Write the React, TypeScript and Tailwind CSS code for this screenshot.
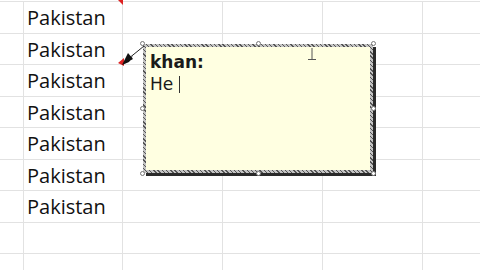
import React from 'react'

const rowHeights = ['h-[32px]', 'h-[31px]', 'h-[32px]', 'h-[31px]', 'h-[32px]', 'h-[31px]', 'h-[32px]', 'h-[31px]', 'h-[32px]']
const texts = ['Pakistan', 'Pakistan', 'Pakistan', 'Pakistan', 'Pakistan', 'Pakistan', 'Pakistan', '', '']

function Handle({ className }: { className: string }) {
  return <div className={`absolute w-[5px] h-[5px] rounded-full bg-white border border-[#777] ${className}`} />
}

export default function App() {
  return (
    <div className="relative w-[480px] h-[270px] overflow-hidden bg-white" style={{ fontFamily: '"Open Sans", sans-serif' }}>
      {/* grid */}
      <div className="flex flex-col border-t border-[#e2e2e2] mt-px">
        {rowHeights.map((h, i) => (
          <div key={i} className={`flex ${h} shrink-0`}>
            <div className="w-[24px] shrink-0 border-r border-b border-[#e2e2e2]" />
            <div className="w-[99px] shrink-0 border-r border-b border-[#e2e2e2] flex items-center pl-[3px] pt-[1px] text-[20px] text-[#111] leading-none">
              {texts[i]}
            </div>
            <div className="w-[100px] shrink-0 border-r border-b border-[#e2e2e2]" />
            <div className="w-[100px] shrink-0 border-r border-b border-[#e2e2e2]" />
            <div className="w-[100px] shrink-0 border-r border-b border-[#e2e2e2]" />
            <div className="flex-1 border-b border-[#e2e2e2]" />
          </div>
        ))}
      </div>

      {/* comment box */}
      <div className="absolute left-[143px] top-[44px] w-[230px] h-[129px] p-[3px] bg-[repeating-linear-gradient(45deg,#555_0_1px,#c4c4c4_1px_3px)] shadow-[3px_3px_0_#2a2a2a]">
        <div className="w-full h-full bg-[#ffffe1] px-[4px] pt-[5px] text-[#1a1a1a]" style={{ fontFamily: 'Tahoma, "DejaVu Sans", sans-serif' }}>
          <div className="font-bold text-[17px] leading-[21px]">khan:</div>
          <div className="text-[17px] leading-[23px] flex items-center">
            He<span className="inline-block w-px h-[17px] bg-[#333] ml-[6px]" />
          </div>
        </div>
        <Handle className="-left-[3px] -top-[3px]" />
        <Handle className="left-[113px] -top-[3px]" />
        <Handle className="-right-[3px] -top-[3px]" />
        <Handle className="-left-[3px] top-[62px]" />
        <Handle className="-right-[3px] top-[62px]" />
        <Handle className="-left-[3px] -bottom-[3px]" />
        <Handle className="left-[113px] -bottom-[3px]" />
        <Handle className="-right-[3px] -bottom-[3px]" />
      </div>

      {/* comment indicators, arrow and mouse cursor */}
      <svg className="absolute left-0 top-0" width="480" height="270">
        <polygon points="118,0 123,0 123,5" fill="#d22" />
        <polygon points="118,63 124,58 124,66" fill="#d22" />
        <line x1="144" y1="46" x2="128" y2="59" stroke="#222" strokeWidth="1" />
        <polygon points="122,65 133,56 129,62" fill="#111" />
        <polygon points="122,65 128,53 133,59" fill="#111" />
        <line x1="312" y1="48" x2="312" y2="59" stroke="#555" strokeWidth="1" />
        <line x1="308" y1="59.5" x2="316" y2="59.5" stroke="#555" strokeWidth="1" />
      </svg>
    </div>
  )
}
